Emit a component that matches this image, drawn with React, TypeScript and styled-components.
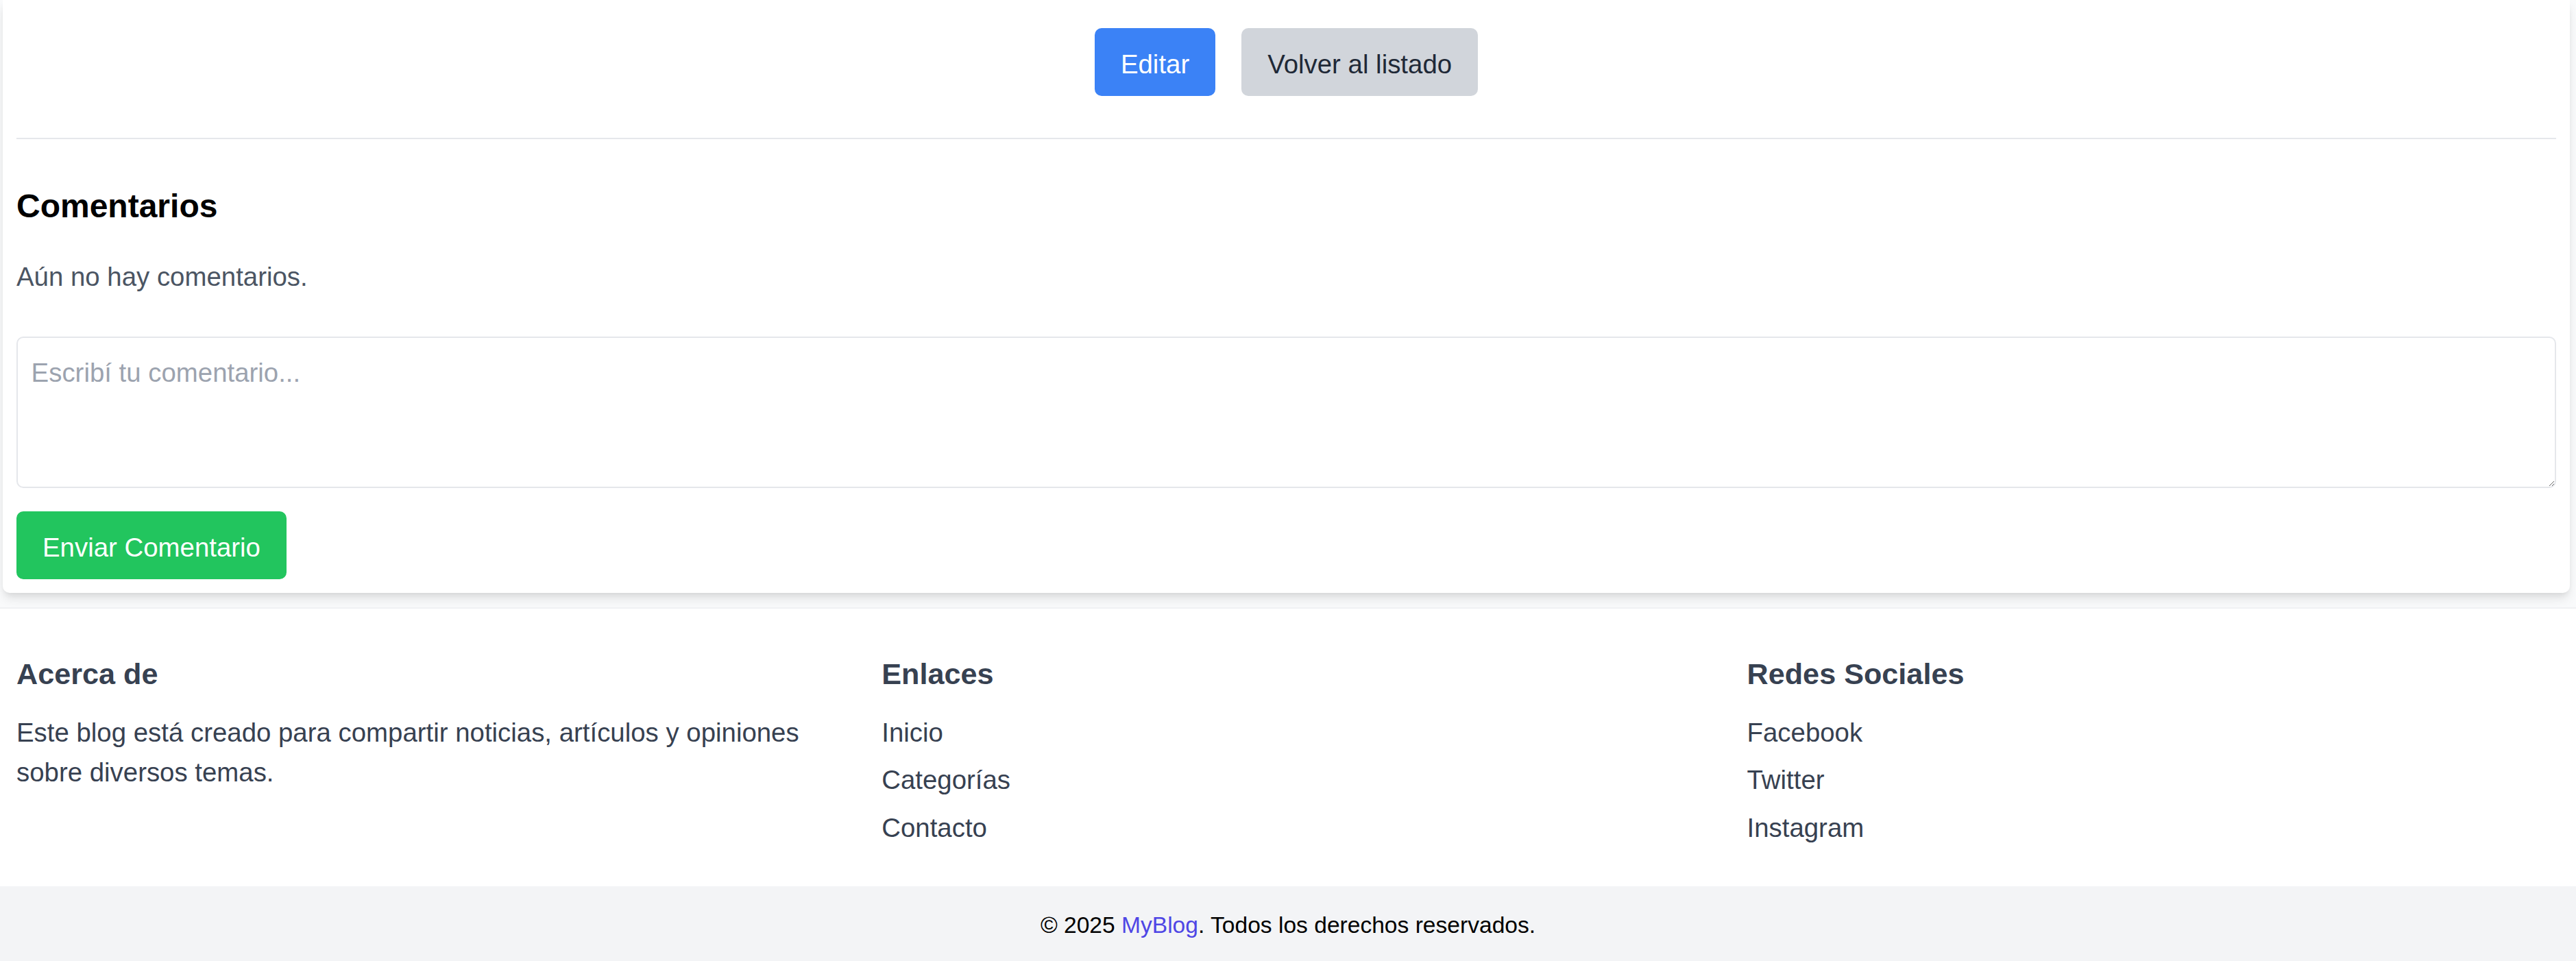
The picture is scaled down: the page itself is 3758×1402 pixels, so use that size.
import React from "react";
import styled, { createGlobalStyle } from "styled-components";

const GlobalStyle = createGlobalStyle`
    body {
        margin: 0;
        background: #f9fafb;
        font-family: "Liberation Sans", Arial, sans-serif;
        color: #1f2937;
    }
`

const Main = styled.main`
    padding: 0 9px 21px 4px;
`

const Card = styled.section`
    background: #ffffff;
    padding: 41px 20px 20px;
    border-radius: 0 0 10px 10px;
    box-shadow: 0 9.6px 14.4px -2.4px rgba(0, 0, 0, 0.1), 0 4.8px 9.6px -4.8px rgba(0, 0, 0, 0.1);
`

const Actions = styled.div`
    display: flex;
    justify-content: center;
    gap: 38px;
    margin-bottom: 61px;
`

const Button = styled.button<{ $bg: string; $fg: string }>`
    display: inline-block;
    border: none;
    border-radius: 10px;
    padding: 24px 38px 17px;
    font-family: inherit;
    font-size: 38.4px;
    line-height: 57.6px;
    background: ${p => p.$bg};
    color: ${p => p.$fg};
    cursor: pointer;
`

const Divider = styled.hr`
    margin: 0;
    border: none;
    border-top: 2.4px solid #e5e7eb;
`

const Title = styled.h2`
    margin: 64px 0 0;
    font-size: 48px;
    line-height: 67.2px;
    font-weight: 700;
    color: #000000;
`

const Empty = styled.p`
    margin: 41px 0 0;
    font-size: 38.4px;
    line-height: 57.6px;
    color: #4b5563;
`

const CommentBox = styled.textarea`
    display: block;
    box-sizing: border-box;
    width: 100%;
    height: 221px;
    margin-top: 59px;
    padding: 21.6px 19.6px;
    border: 2.4px solid #e5e7eb;
    border-radius: 10px;
    font-family: inherit;
    font-size: 38.4px;
    line-height: 57.6px;
    color: #1f2937;
    outline: none;

    &::placeholder {
        color: #9ca3af;
    }
`

const SubmitRow = styled.div`
    margin-top: 34px;
`

const Footer = styled.footer`
    background: #ffffff;
    border-top: 2px solid #f0f1f3;
    padding: 62px 24px 57px;
`

const FooterGrid = styled.div`
    display: grid;
    grid-template-columns: repeat(3, 1fr);
    gap: 76.8px;
`

const Column = styled.div`
    color: #374151;
`

const ColTitle = styled.h3`
    margin: 0 0 23px;
    font-size: 43.2px;
    line-height: 67.2px;
    font-weight: 700;
    color: #374151;
`

const ColText = styled.p`
    margin: 0;
    font-size: 38.4px;
    line-height: 57.6px;
`

const LinkList = styled.ul`
    list-style: none;
    margin: 0;
    padding: 0;
    display: flex;
    flex-direction: column;
    gap: 11.7px;
`

const FooterLink = styled.a`
    font-size: 38.4px;
    line-height: 57.6px;
    color: #374151;
    text-decoration: none;
`

const BottomBar = styled.div`
    background: #f3f4f6;
    padding: 33px 0 38px;
    text-align: center;
    font-size: 33.6px;
    line-height: 48px;
    color: #000000;
`

const Brand = styled.span`
    color: #4f46e5;
`

const App = () => {
    return (
        <>
            <GlobalStyle />
            <Main>
                <Card>
                    <Actions>
                        <Button $bg="#3b82f6" $fg="#ffffff">Editar</Button>
                        <Button $bg="#d1d5db" $fg="#1f2937">Volver al listado</Button>
                    </Actions>
                    <Divider />
                    <Title>Comentarios</Title>
                    <Empty>Aún no hay comentarios.</Empty>
                    <CommentBox placeholder="Escribí tu comentario..." />
                    <SubmitRow>
                        <Button $bg="#22c55e" $fg="#ffffff">Enviar Comentario</Button>
                    </SubmitRow>
                </Card>
            </Main>
            <Footer>
                <FooterGrid>
                    <Column>
                        <ColTitle>Acerca de</ColTitle>
                        <ColText>Este blog está creado para compartir noticias, artículos y opiniones sobre diversos temas.</ColText>
                    </Column>
                    <Column>
                        <ColTitle>Enlaces</ColTitle>
                        <LinkList>
                            <li><FooterLink href="#">Inicio</FooterLink></li>
                            <li><FooterLink href="#">Categorías</FooterLink></li>
                            <li><FooterLink href="#">Contacto</FooterLink></li>
                        </LinkList>
                    </Column>
                    <Column>
                        <ColTitle>Redes Sociales</ColTitle>
                        <LinkList>
                            <li><FooterLink href="#">Facebook</FooterLink></li>
                            <li><FooterLink href="#">Twitter</FooterLink></li>
                            <li><FooterLink href="#">Instagram</FooterLink></li>
                        </LinkList>
                    </Column>
                </FooterGrid>
            </Footer>
            <BottomBar>
                © 2025 <Brand>MyBlog</Brand>. Todos los derechos reservados.
            </BottomBar>
        </>
    )
}

export default App;
